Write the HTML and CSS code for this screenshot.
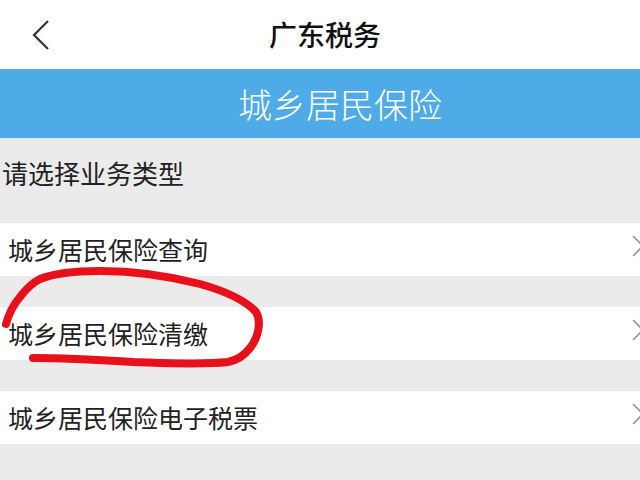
FILE: index.html
```html
<!DOCTYPE html>
<html lang="zh-CN">
<head>
<meta charset="UTF-8">
<meta name="viewport" content="width=device-width, initial-scale=1.0">
<title>广东税务</title>
<link rel="stylesheet" href="styles.css">
</head>
<body>
<div class="page">
    <div class="nav-bar">
        <svg class="back-icon" width="20" height="32" viewBox="0 0 20 32">
            <polyline points="17,2 3,16 17,30" fill="none" stroke="#333" stroke-width="2.2"/>
        </svg>
        <div class="nav-title">广东税务</div>
    </div>

    <div class="banner">城乡居民保险</div>

    <div class="section-title">请选择业务类型</div>

    <div class="menu-list">
        <div class="menu-item">
            <span>城乡居民保险查询</span>
            <svg class="chevron" width="14" height="22" viewBox="0 0 14 22"><polyline points="2,1 12,11 2,21" fill="none" stroke="#9a9a9a" stroke-width="1.6"/></svg>
        </div>
        <div class="menu-item">
            <span>城乡居民保险清缴</span>
            <svg class="chevron" width="14" height="22" viewBox="0 0 14 22"><polyline points="2,1 12,11 2,21" fill="none" stroke="#9a9a9a" stroke-width="1.6"/></svg>
        </div>
        <div class="menu-item">
            <span>城乡居民保险电子税票</span>
            <svg class="chevron" width="14" height="22" viewBox="0 0 14 22"><polyline points="2,1 12,11 2,21" fill="none" stroke="#9a9a9a" stroke-width="1.6"/></svg>
        </div>
    </div>

    <svg class="marker" width="640" height="480" viewBox="0 0 640 480">
        <path d="M6,324 C9,313 14,304 20,297 C26,289 32,283 40,279 C55,273 75,271 100,271 C130,271 165,275 200,284 C225,291 245,300 256,312 C262,322 258,338 250,348 C244,356 238,360 228,362 C200,365 165,363 133,362 C100,360 60,358 33,358" fill="none" stroke="#e8101a" stroke-width="8" stroke-linecap="round" stroke-linejoin="round"/>
    </svg>
</div>
</body>
</html>
```

FILE: styles.css
```css
body {
    margin: 0;
    background-color: #ebebeb;
    font-family: "Noto Sans CJK SC", "Noto Sans", sans-serif;
    color: #222;
}
.page {
    position: relative;
    width: 640px;
    height: 480px;
    overflow: hidden;
}
.nav-bar {
    position: relative;
    height: 69px;
    background-color: #fff;
    display: flex;
    align-items: center;
    justify-content: center;
    padding-left: 10px;
    box-sizing: border-box;
}
.back-icon {
    position: absolute;
    left: 31px;
    top: 19px;
}
.nav-title {
    font-size: 28px;
    font-weight: 500;
    color: #111;
    margin-top: -2px;
}
.banner {
    height: 69px;
    background-color: #4eabe7;
    color: #fff;
    font-size: 34px;
    font-weight: 300;
    display: flex;
    align-items: center;
    justify-content: center;
    padding-left: 40px;
    box-sizing: border-box;
}
.section-title {
    height: 85px;
    font-size: 26px;
    display: flex;
    align-items: center;
    padding-left: 2px;
    padding-bottom: 16px;
    box-sizing: border-box;
}
.menu-list {
    display: flex;
    flex-direction: column;
    gap: 31px;
}
.menu-item {
    height: 53px;
    background-color: #fff;
    display: flex;
    align-items: center;
    justify-content: space-between;
    padding-left: 8px;
    padding-bottom: 2px;
    font-size: 25px;
    box-sizing: border-box;
}
.chevron {
    margin-right: -5px;
    margin-top: -6px;
}
.marker {
    position: absolute;
    left: 0;
    top: 0;
}
```
